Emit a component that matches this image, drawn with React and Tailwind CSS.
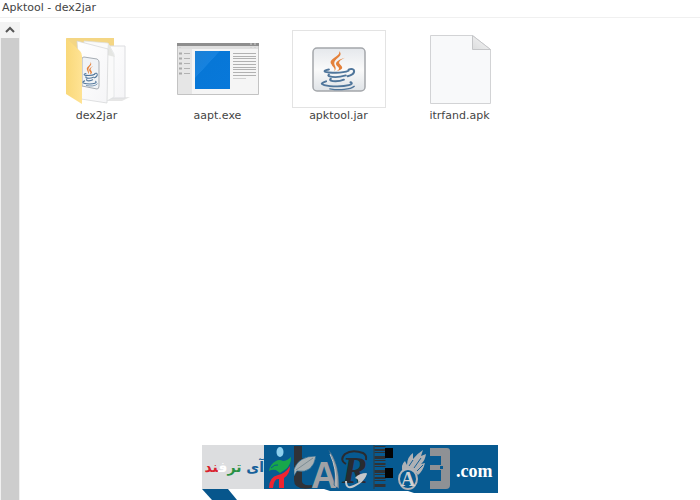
import React from "react";

function JavaCup() {
  return (
    <g fill="none" strokeLinecap="round">
      <path d="M30 6C32 13 17 15 22 22c1 3 4 4 3 8 4-5-3-8 1-13 3-4 8-6 4-11z" fill="#e4813b" />
      <path d="M36 14c-9 3-12 7-7 11 2 2 0 4-2 5 8-2 7-5 4-8-3-3 1-6 5-8z" fill="#e4813b" />
      <g stroke="#50769b" strokeWidth="2.2">
        <path d="M19 28c-5 1-7 3 0 3.500 8 .6 17 0 21-2" />
        <path d="M19 34c-2 2 2 3 7 3s8-1 11-2" />
        <path d="M21 39c-2 2 1 3 5 3s7-1 9-2" />
        <path d="M40 28c7-3 9 5-1 8" />
        <path d="M16 42c-12 4 3 6 12 6s19-2 14-5" />
        <path d="M20 51c10 2 22 1 26-3" strokeWidth="1.500" />
      </g>
    </g>
  );
}

function FolderIcon() {
  return (
    <svg width="66" height="70" viewBox="0 0 66 70" aria-hidden="true">
      <defs>
        <linearGradient id="flap" x1="0" y1="0" x2="1" y2="0">
          <stop offset="0" stopColor="#f9d879" />
          <stop offset="1" stopColor="#ffe394" />
        </linearGradient>
        <linearGradient id="sheet" x1="0" y1="0" x2="1" y2="1">
          <stop offset="0" stopColor="#fff" />
          <stop offset="1" stopColor="#f5f5f7" />
        </linearGradient>
      </defs>
      <path d="M44 64l22-1-8 4H44z" fill="#e6e6e6" />
      <path d="M2 4h48v16H12z" fill="#f4d684" />
      <path d="M40 12h21v52H40z" fill="url(#sheet)" stroke="#dcdde0" />
      <path d="M20 7l24 2 6 11v43l-9 5-20-5z" fill="#fafafa" stroke="#dddfe1" strokeWidth=".7" />
      <path d="M44 9l7 14-8-2z" fill="#e5e6e3" />
      <path d="M13 7l31 8-1 54-26-4z" fill="url(#sheet)" stroke="#d3d4d6" strokeWidth=".7" />
      <path d="M18 25q0-2 2-2l13 2q2 1 2 3v24q0 3-2 3l-15-3z" fill="#f0f3f6" stroke="#a7adb4" />
      <g transform="translate(14 25) scale(.42 .52)"><JavaCup /></g>
      <path d="M2 4l14 13q2 2 2 5v48L2 60z" fill="url(#flap)" />
    </svg>
  );
}

function ProgramIcon() {
  return (
    <svg width="82" height="53" viewBox="0 0 82 53" aria-hidden="true">
      <defs>
        <linearGradient id="screen" x1="0" y1="0" x2="1" y2="1">
          <stop offset="0" stopColor="#1c80d5" />
          <stop offset=".35" stopColor="#1682df" />
          <stop offset=".36" stopColor="#0777d7" />
          <stop offset="1" stopColor="#0878da" />
        </linearGradient>
      </defs>
      <path d="M.5.5h81v51H.5z" fill="#f5f5f5" stroke="#c3c3c3" />
      <path d="M1 6h14v45H1z" fill="#e6e6e6" />
      <path d="M0 0h82v3H0z" fill="#8e8e8e" />
      <path d="M1 3h80v3H1z" fill="#dedede" />
      <path d="M73 1h2m2 0h2M2 4.500h2m69 0h2m2 0h2" stroke="#d3d3d3" />
      <path d="M2 10.500h3m-3 5h3m-3 5h3m-3 5h3m-3 5h3" stroke="#aaa" strokeWidth="2" />
      <path d="M7 10.500h6m-6 5h6m-6 5h6m-6 5h6m-6 5h6" stroke="#b2b2b2" />
      <path d="M18 8h35v38H18z" fill="url(#screen)" />
      <path d="M56 10.500h23m-23 3h23m-23 2h23m-23 3h23m-23 3h23m-23 3h23m-23 2h23m-23 3h23m-23 3h23" stroke="#b1b1b1" />
      <path d="M56 35.500h13" stroke="#d0d0d0" />
    </svg>
  );
}

function JarIcon() {
  return (
    <svg width="54" height="46" viewBox="0 0 54 46" aria-hidden="true">
      <defs>
        <linearGradient id="tile" x1="0" y1="0" x2="0" y2="1">
          <stop offset="0" stopColor="#e5e8ec" />
          <stop offset=".5" stopColor="#fafafa" />
          <stop offset="1" stopColor="#dfe3e7" />
        </linearGradient>
      </defs>
      <rect x="1" y="2" width="52" height="43" rx="4" fill="url(#tile)" stroke="#a4a7ab" strokeWidth="1.500" />
      <g transform="translate(-1 0) scale(.94 .84)"><JavaCup /></g>
    </svg>
  );
}

function BlankIcon() {
  return (
    <svg width="62" height="69" viewBox="0 0 62 69" aria-hidden="true">
      <defs>
        <linearGradient id="fold" x1="0" y1="1" x2="1" y2="0">
          <stop offset="0" stopColor="#dcddde" />
          <stop offset="1" stopColor="#f8f8f8" />
        </linearGradient>
      </defs>
      <path d="M1.500.5h42l18 14v54h-60z" fill="#f8f9fa" stroke="#d2d3d5" />
      <path d="M43.500.5v14h18z" fill="url(#fold)" stroke="#c5c6c8" />
    </svg>
  );
}

function Watermark() {
  return (
    <svg width="296" height="55" viewBox="0 0 296 55" role="img" aria-label="آی ترفند .com">
      <path d="M0 0h62v44H0z" fill="#dcdddf" />
      <path d="M62 0h234v48h-84l-6-2h-78l-6-2H62z" fill="#075a91" />
      <path d="M0 44h26l9 11H10z" fill="#07568c" />
      <text x="62" y="27" direction="rtl" fontFamily="DejaVu Sans, sans-serif" fontWeight="700" fontSize="14">
        <tspan fill="#17609a">آی </tspan>
        <tspan fill="#2a9144">تر</tspan>
        <tspan fill="#fff">ف</tspan>
        <tspan fill="#d9232f">ند</tspan>
      </text>

      <ellipse cx="78" cy="7" rx="3.500" ry="5" fill="#8ed0ee" />
      <path d="M67 26q1-7 7-10 3-2 7 0 4 0 8-4 0 8-5 12l-6 4-4-3q-4-1-7 1z" fill="#18a64b" />
      <path d="M69 23q4-4 7-3" fill="none" stroke="#075a91" />
      <path d="M67 43q0-11 9-13 7-1 12-9 0 8-6 12v10h-5V34q-5-1-6 9z" fill="#ee2430" />

      <path d="M92 1h8v12l10 1v5l-10 2v15q0 5 10 4v3q-18 3-18-8z" fill="#303237" />
      <path d="M92 24q5-13 22-13-3 18-19 15l-3 5z" fill="#aab1b3" stroke="#075a91" strokeWidth=".6" />
      <path d="M94 25l17-12" stroke="#7e8d94" />
      <text x="109" y="43" fontFamily="Liberation Sans, sans-serif" fontWeight="700" fontSize="36" fill="#a1a2a5">A</text>
      <path d="M126 4q12 14 11 40l-5-4q3-18-6-36z" fill="#989b9e" stroke="#07568c" strokeWidth=".6" />
      <path d="M128 9q7 15 6 33" stroke="#c6c8ca" fill="none" />

      <text x="140" y="38" fontFamily="Liberation Serif, serif" fontStyle="italic" fontWeight="700" fontSize="38" fill="#292b30">R</text>
      <path d="M144 19q-7-4-1-10 7-5 18-1 4 2 3 7" fill="none" stroke="#292b30" strokeWidth="2" />
      <path d="M144 36q0 9 8 5 9-4 12-12" fill="none" stroke="#c4c8cb" strokeWidth="2" />
      <path d="M153 33q4-5 12-5-3 8-9 9 1-3-3-4z" fill="#c4c8cb" />

      <path d="M172 0v44" stroke="#323a3d" />
      <path d="M178 1v42" stroke="#303235" strokeWidth="11" strokeDasharray="1 2 2 1 1 3 3 1" />
      <path d="M183 3h8v10h-8zm0 20h8v10h-8z" fill="#030405" />

      <path d="M201 28q-3-8 2-12l2 4q0-8 6-12v6q5-6 10-9l-2 6 5-2q-1 7-5 10l4-1q-2 8-7 12-5-6-15-2z" fill="#aeb1b5" />
      <path d="M207 21l4-6m1 8l7-10m-4 13l6-6" stroke="#166095" />
      <ellipse cx="206" cy="34" rx="9" ry="10" fill="#075a91" stroke="#b2b4b8" strokeWidth="2" />
      <text x="206" y="41" textAnchor="middle" fontFamily="Liberation Serif, serif" fontWeight="700" fontSize="20" fill="#d1d2d4">A</text>

      <path d="M228 3h17q3 0 3 3v34q0 4-4 4h-16v-8h11V25h-11v-5h11v-9h-11z" fill="#8e9195" />
      <path d="M238 21h3v3h-3z" fill="#075a91" />
      <text x="254" y="32" fontFamily="Liberation Serif, serif" fontWeight="700" fontSize="18" fill="#fff">.com</text>
    </svg>
  );
}

const files = [
  { name: "dex2jar", icon: <FolderIcon /> },
  { name: "aapt.exe", icon: <ProgramIcon /> },
  { name: "apktool.jar", icon: <JarIcon />, framed: true },
  { name: "itrfand.apk", icon: <BlankIcon /> },
];

export default function App() {
  return (
    <div className="relative flex h-screen flex-col overflow-hidden bg-white font-['DejaVu_Sans',sans-serif] text-[11px] text-[#444]">
      <header className="border-b border-[#f0f0f0] px-0.5 pb-px">
        <h1 className="leading-4">Apktool - dex2jar</h1>
      </header>
      <div className="flex min-h-0 flex-1 pt-1">
        <div className="flex w-5 shrink-0 flex-col">
          <button type="button" aria-label="Scroll up" className="flex h-4 items-center justify-center bg-[#f3f3f3]">
            <svg width="10" height="8" viewBox="0 0 10 8" fill="none" aria-hidden="true">
              <path d="M1 6l4-4 4 4" stroke="#555" strokeWidth="2" />
            </svg>
          </button>
          <div className="flex-1 border-x border-[#f0f0f0] bg-[#cdcdcd]" />
        </div>
        <main className="min-w-0 flex-1 px-4 pt-2">
          <ul className="flex flex-wrap">
            {files.map((file) => (
              <li key={file.name} className="w-[121px]">
                <button type="button" className="flex w-full flex-col items-center">
                  <span
                    className={
                      file.framed
                        ? "flex h-[78px] w-[94px] items-center justify-center border border-[#e3e3e3]"
                        : "flex h-[78px] w-[94px] items-center justify-center"
                    }
                  >
                    {file.icon}
                  </span>
                  <span className="leading-4">{file.name}</span>
                </button>
              </li>
            ))}
          </ul>
        </main>
      </div>
      <footer className="pointer-events-none absolute inset-x-0 bottom-0 flex justify-center">
        <Watermark />
      </footer>
    </div>
  );
}
